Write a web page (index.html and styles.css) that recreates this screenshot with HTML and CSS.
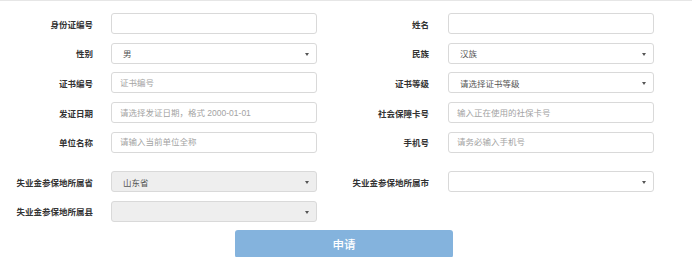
FILE: index.html
```html
<!DOCTYPE html>
<html lang="zh-CN">
<head>
  <meta charset="UTF-8" />
  <meta name="viewport" content="width=device-width, initial-scale=1.0" />
  <title>失业金申请</title>
  <link rel="stylesheet" href="styles.css">
</head>
<body>
  <form class="apply-form">
    <div class="grid">
      <label class="lbl">身份证编号</label>
      <input class="field" type="text" />
      <label class="lbl lbl-r">姓名</label>
      <input class="field" type="text" />

      <label class="lbl">性别</label>
      <div class="select"><span>男</span></div>
      <label class="lbl lbl-r">民族</label>
      <div class="select"><span>汉族</span></div>

      <label class="lbl">证书编号</label>
      <input class="field" type="text" placeholder="证书编号" />
      <label class="lbl lbl-r">证书等级</label>
      <div class="select"><span>请选择证书等级</span></div>

      <label class="lbl">发证日期</label>
      <input class="field" type="text" placeholder="请选择发证日期，格式 2000-01-01" />
      <label class="lbl lbl-r">社会保障卡号</label>
      <input class="field" type="text" placeholder="输入正在使用的社保卡号" />

      <label class="lbl">单位名称</label>
      <input class="field" type="text" placeholder="请输入当前单位全称" />
      <label class="lbl lbl-r">手机号</label>
      <input class="field" type="text" placeholder="请务必输入手机号" />
    </div>

    <div class="grid area">
      <label class="lbl">失业金参保地所属省</label>
      <div class="select disabled"><span>山东省</span></div>
      <label class="lbl lbl-r">失业金参保地所属市</label>
      <div class="select"><span></span></div>

      <label class="lbl">失业金参保地所属县</label>
      <div class="select disabled"><span></span></div>
    </div>

    <div class="actions">
      <button type="button" class="btn-apply">申请</button>
    </div>
  </form>
</body>
</html>
```

FILE: styles.css
```css
body {
  margin: 0;
  background: #fff;
  font-family: "Liberation Sans", "Noto Sans CJK SC", sans-serif;
  color: #333;
}
.apply-form {
  border-top: 1px solid #e6e6e6;
  padding-top: 12px;
  height: 256px;
  overflow: hidden;
}
.grid {
  display: grid;
  grid-template-columns: 111px 206px 131px 206px;
  grid-auto-rows: 21px;
  row-gap: 8.7px;
  align-items: center;
}
.area {
  margin-top: 18.5px;
}
.lbl {
  font-size: 8.5px;
  font-weight: bold;
  text-align: right;
  padding-right: 18px;
  color: #333;
}
.lbl-r {
  padding-right: 19px;
}
.field, .select {
  box-sizing: border-box;
  height: 21px;
  width: 206px;
  border: 1px solid #d9d9d9;
  border-radius: 3px;
  background: #fff;
  font-family: "Liberation Sans", "Noto Sans CJK SC", sans-serif;
  font-size: 8.5px;
  color: #555;
  padding: 0 8px;
  outline: none;
}
.field::placeholder {
  color: #a3a3a3;
}
.select {
  position: relative;
  display: flex;
  align-items: center;
  padding-left: 11px;
}
.select::after {
  content: "";
  position: absolute;
  right: 7px;
  top: 9px;
  border-left: 2px solid transparent;
  border-right: 2px solid transparent;
  border-top: 3px solid #555;
}
.disabled {
  background: #eee;
}
.actions {
  margin-top: 8px;
  padding-left: 235px;
}
.btn-apply {
  width: 218px;
  height: 28px;
  border: none;
  border-radius: 3px;
  background: #84b3dd;
  color: #fff;
  font-family: "Noto Sans CJK SC", sans-serif;
  font-size: 11.5px;
  font-weight: 500;
  padding: 0;
}
```
